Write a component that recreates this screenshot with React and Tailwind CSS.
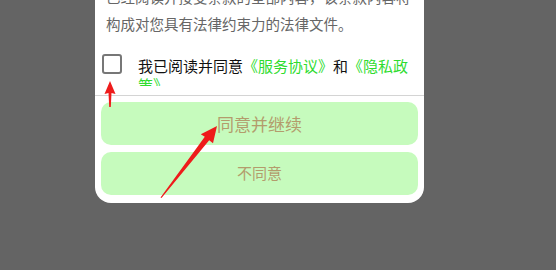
import React from "react";

const Arrows = () => (
  <svg
    className="absolute left-0 top-0 pointer-events-none"
    width="556"
    height="270"
    viewBox="0 0 556 270"
  >
    {/* small arrow pointing at the checkbox */}
    <polygon points="110,81 115.5,94 111.5,93 110.8,107 109.2,107 108.5,93 104.5,94" fill="#ee1b1b" />
    {/* long arrow pointing at the agree button */}
    <polygon
      points="217,126 213,143.2 209.2,140.3 161.5,198 160.5,197.6 204.8,136.8 200.8,134.2"
      fill="#ee1b1b"
    />
  </svg>
);

const App = () => {
  return (
    <div
      className="relative w-[556px] h-[270px] overflow-hidden bg-[#646464]"
      style={{ fontFamily: '"Noto Sans CJK SC", "Noto Sans", sans-serif' }}
    >
      <div className="ml-[95px] -mt-[17px] w-[329px] bg-white rounded-b-[16px] pb-[8px]">
        <p className="px-[11px] text-[14.5px] leading-[27px] text-[#666666]">
          已经阅读并接受条款的全部内容，该条款内容将构成对您具有法律约束力的法律文件。
        </p>

        <div className="mt-[17px] h-[32px] overflow-hidden flex items-start pl-[7px]">
          <div className="w-[20px] h-[20px] shrink-0 border-2 border-[#777777] rounded-[3px]" />
          <div className="ml-[16px] pt-[2px] w-[280px] text-[15px] leading-[19px] text-[#111111]">
            我已阅读并同意
            <span className="text-[#2fdc2f]">《服务协议》</span>和
            <span className="text-[#2fdc2f]">《隐私政策》</span>
          </div>
        </div>

        <div className="mt-[9px] h-px bg-[#d4d4d4]" />

        <div className="mt-[6px] mx-[6px] flex flex-col gap-[7px]">
          <button className="h-[43px] rounded-[10px] bg-[#c6fbbd] text-[17px] text-[#b39c6c]">
            同意并继续
          </button>
          <button className="h-[43px] rounded-[10px] bg-[#c6fbbd] text-[15px] text-[#b39c6c]">
            不同意
          </button>
        </div>
      </div>
      <Arrows />
    </div>
  );
};

export default App;
